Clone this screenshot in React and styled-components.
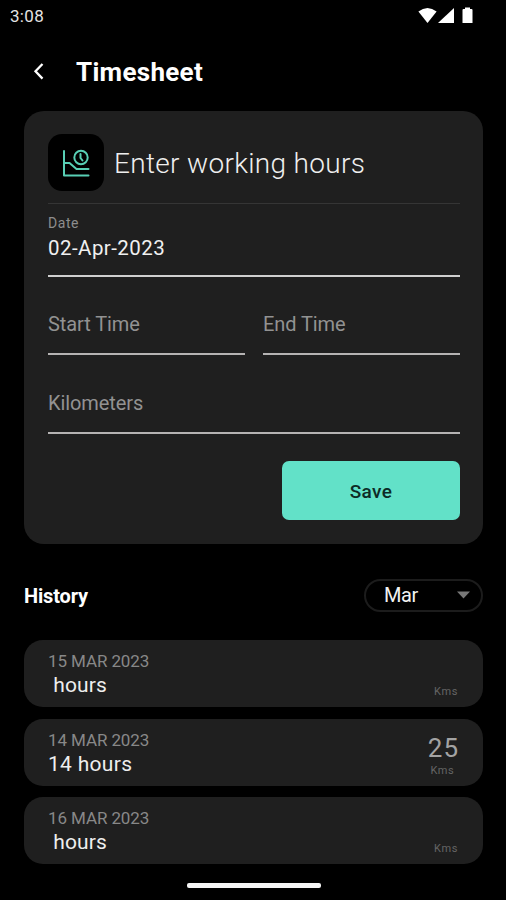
import React from "react";
import styled, { createGlobalStyle } from "styled-components";

const GlobalStyle = createGlobalStyle`
  * { box-sizing: border-box; }
  body { margin: 0; background: #000; }
  button, input { font: inherit; }
`;

const Screen = styled.main`
  width: 506px;
  height: 900px;
  display: flex;
  flex-direction: column;
  overflow: hidden;
  background: #000;
  color: #fff;
  font-family: Roboto, "Noto Sans", sans-serif;
`;

const StatusBar = styled.div`
  height: 33px;
  padding: 0 32px 1px 10px;
  display: flex;
  align-items: center;
  justify-content: space-between;
  color: #e4e4e4;
  font-size: 17px;
  line-height: 20px;
  letter-spacing: 0.3px;
`;

const StatusIcons = styled.svg`
  width: 56px;
  height: 18px;
  display: block;
  margin-top: -2px;
`;

const Header = styled.header`
  height: 78px;
  padding-left: 32px;
  display: flex;
  align-items: center;
`;

const BackButton = styled.button`
  width: 44px;
  height: 24px;
  padding: 0;
  border: 0;
  background: none;
  color: #fff;
  text-align: left;

  svg {
    display: block;
    margin-top: -3px;
  }
`;

const Title = styled.h1`
  margin: 0;
  font-size: 26px;
  line-height: 32px;
  font-weight: 700;
  letter-spacing: 0.3px;
`;

const Card = styled.section`
  height: 433px;
  margin: 0 23px 0 24px;
  padding: 23px 23px 24px 24px;
  display: flex;
  flex-direction: column;
  border-radius: 20px;
  background: #1f1f1f;
`;

const CardHead = styled.div`
  height: 70px;
  padding-bottom: 12px;
  display: flex;
  align-items: center;
  gap: 10px;
  border-bottom: 1px solid #353535;
`;

const IconTile = styled.div`
  width: 56px;
  height: 57px;
  display: grid;
  place-items: center;
  border-radius: 14px;
  background: #000;
`;

const CardTitle = styled.h2`
  margin: 3px 0 0;
  font-size: 28px;
  line-height: 34px;
  font-weight: 300;
  letter-spacing: 0.32px;
  color: #efefef;
`;

const FilledField = styled.div`
  height: 73px;
  padding-top: 11px;
  border-bottom: 2px solid #cfcfcf;
`;

const FieldLabel = styled.div`
  margin-bottom: 5px;
  font-size: 14px;
  line-height: 16px;
  letter-spacing: 0.55px;
  color: #8d8d8d;
`;

const FieldValue = styled.div`
  font-size: 20.5px;
  line-height: 25px;
  letter-spacing: 0.45px;
  color: #f0f0f0;
`;

const FieldRow = styled.div`
  display: grid;
  grid-template-columns: 1fr 1fr;
  column-gap: 18px;
`;

const EmptyField = styled.div`
  height: ${(p) => p.$height}px;
  padding-top: ${(p) => p.$height - 43}px;
  border-bottom: 2px solid #b5b3b3;
  font-size: 20px;
  line-height: 24px;
  letter-spacing: -0.08px;
  color: #929292;
`;

const SaveButton = styled.button`
  width: 178px;
  height: 59px;
  margin-top: 27px;
  padding: 2px 0 0;
  align-self: flex-end;
  border: 0;
  border-radius: 7px;
  background: #62e1c8;
  color: #0d2b26;
  font-size: 19px;
  font-weight: 500;
  letter-spacing: 0.4px;
`;

const HistoryHead = styled.div`
  height: 96px;
  padding: 7px 23px 0 24px;
  display: flex;
  align-items: center;
  justify-content: space-between;
`;

const HistoryTitle = styled.h3`
  margin: 1px 0 0;
  font-size: 20px;
  line-height: 24px;
  font-weight: 700;
  letter-spacing: -0.15px;
`;

const MonthSelect = styled.button`
  width: 119px;
  height: 33px;
  padding: 0 13px 1px 18px;
  display: flex;
  align-items: center;
  justify-content: space-between;
  border: 2px solid #1c1c1c;
  border-radius: 17px;
  background: #000;
  color: #f2f2f2;
  font-size: 20px;
  line-height: 24px;
  letter-spacing: -0.4px;
`;

const Caret = styled.svg`
  width: 13px;
  height: 8px;
  margin-right: -2px;
  fill: #777;
`;

const HistoryList = styled.div`
  margin: 0 23px 0 24px;
  display: flex;
  flex-direction: column;
  gap: 11.5px;
`;

const Entry = styled.article`
  height: 67px;
  padding: 0 25px 0 24px;
  display: flex;
  justify-content: space-between;
  border-radius: 19px;
  background: #1f1f1f;
`;

const EntryInfo = styled.div`
  padding-top: 11px;
`;

const EntryDate = styled.div`
  font-size: 17px;
  line-height: 20px;
  letter-spacing: -0.1px;
  color: #888;
`;

const EntryHours = styled.div`
  margin-top: 2px;
  font-size: 21px;
  line-height: 25px;
  letter-spacing: ${(p) => (p.$blank ? 0.1 : 0.3)}px;
  white-space: pre;
  color: #eee;
`;

const EntryDistance = styled.div`
  padding: 12px 0 8px;
  display: flex;
  flex-direction: column;
  align-items: center;
  justify-content: flex-end;
`;

const Distance = styled.div`
  font-size: 26px;
  line-height: 29px;
  letter-spacing: 1px;
  margin-right: -1px;
  color: #a3a3a3;
`;

const Unit = styled.div`
  font-size: 11px;
  line-height: 15px;
  letter-spacing: 0.6px;
  margin-right: ${(p) => (p.$offset ? 1 : 0)}px;
  color: #656565;
`;

const HomeIndicator = styled.div`
  width: 134px;
  height: 5px;
  margin: 19px 0 0 187px;
  border-radius: 2px;
  background: #f5f5f5;
`;

const entries = [
  { date: "15 MAR 2023", hours: "", kms: "" },
  { date: "14 MAR 2023", hours: "14", kms: "25" },
  { date: "16 MAR 2023", hours: "", kms: "" },
];

function TimesheetIcon() {
  return (
    <svg width="28" height="28" viewBox="0 0 28 28" fill="none" stroke="#58cfb5" strokeWidth="2" strokeLinecap="round" strokeLinejoin="round">
      <path d="M2 2v24.500h24.500" />
      <path d="M2 14h5.500l7 6h12" />
      <circle cx="19" cy="8.500" r="6.700" />
      <path d="M18.500 5v4l2 2.500" />
    </svg>
  );
}

export default function App() {
  return (
    <>
      <GlobalStyle />
      <Screen>
        <StatusBar>
          <span>3:08</span>
          <StatusIcons viewBox="0 0 56 18" fill="#fff">
            <path d="M.4 5.500Q9.500 -1.500 18.600 5.500L9.500 17Z" />
            <path d="M36 2v15H20Z" />
            <path d="M44.500 4q0-1 1-1H47V1.500h5V3h1.500q1 0 1 1V17h-10Z" />
          </StatusIcons>
        </StatusBar>
        <Header>
          <BackButton aria-label="Back">
            <svg width="14" height="24" viewBox="0 0 14 24" fill="none" stroke="currentColor" strokeWidth="2.300">
              <path d="M10.500 5L3.500 12.300l7 7.300" />
            </svg>
          </BackButton>
          <Title>Timesheet</Title>
        </Header>
        <Card>
          <CardHead>
            <IconTile><TimesheetIcon /></IconTile>
            <CardTitle>Enter working hours</CardTitle>
          </CardHead>
          <FilledField>
            <FieldLabel>Date</FieldLabel>
            <FieldValue>02-Apr-2023</FieldValue>
          </FilledField>
          <FieldRow>
            <EmptyField $height={78}>Start Time</EmptyField>
            <EmptyField $height={78}>End Time</EmptyField>
          </FieldRow>
          <EmptyField $height={79}>Kilometers</EmptyField>
          <SaveButton>Save</SaveButton>
        </Card>
        <HistoryHead>
          <HistoryTitle>History</HistoryTitle>
          <MonthSelect>
            Mar
            <Caret viewBox="0 0 13 8"><path d="M0 .5h13L6.500 7.500Z" /></Caret>
          </MonthSelect>
        </HistoryHead>
        <HistoryList>
          {entries.map((e) => (
            <Entry key={e.date}>
              <EntryInfo>
                <EntryDate>{e.date}</EntryDate>
                <EntryHours $blank={!e.hours}>{e.hours} hours</EntryHours>
              </EntryInfo>
              <EntryDistance>
                {e.kms && <Distance>{e.kms}</Distance>}
                <Unit $offset={Boolean(e.kms)}>Kms</Unit>
              </EntryDistance>
            </Entry>
          ))}
        </HistoryList>
        <HomeIndicator />
      </Screen>
    </>
  );
}
